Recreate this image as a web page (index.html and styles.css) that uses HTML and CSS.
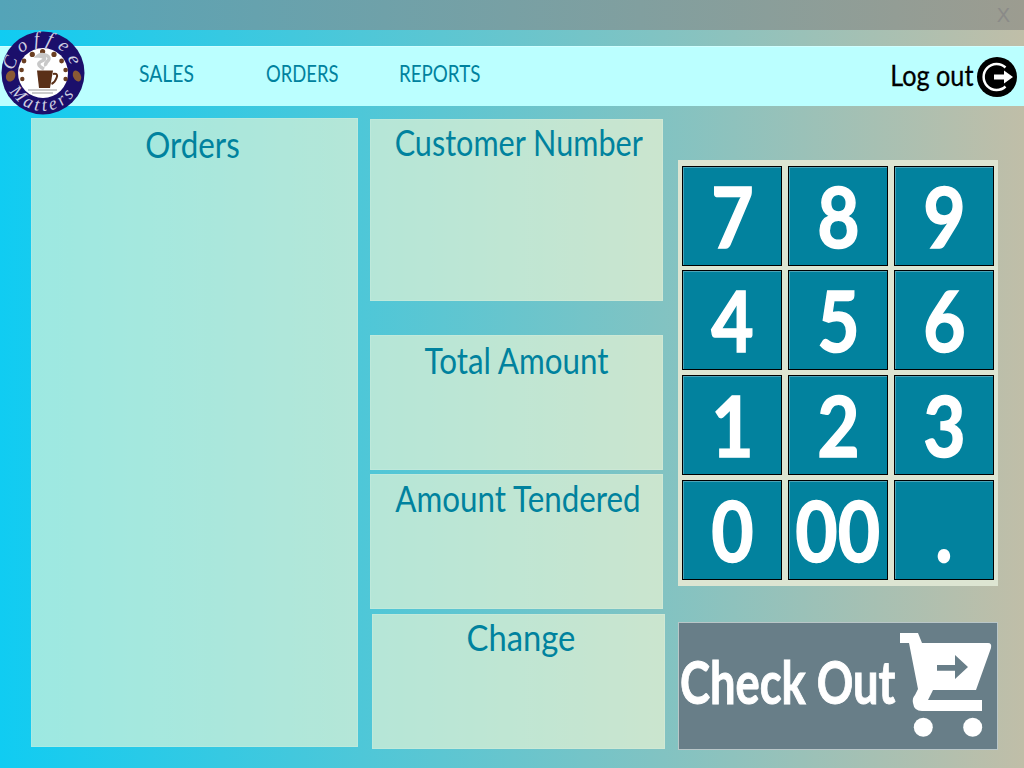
FILE: index.html
```html
<!DOCTYPE html>
<html lang="en">
<head>
<meta charset="utf-8">
<title>Coffee Matters POS</title>
<link rel="stylesheet" href="styles.css">
</head>
<body>
<div class="titlebar"><span class="close">X</span></div>
<header class="nav">
  <svg class="logo" viewBox="0 0 84 84" width="84" height="84">
    <circle cx="42" cy="42" r="41.500" fill="#1b0f6b"/>
    <circle cx="42" cy="42" r="25" fill="#fff"/>
    <defs>
      <path id="arcTop" d="M14.650 50 A28.500 28.500 0 1 1 69.350 50"/>
      <path id="arcBot" d="M4.500 48 A38 38 0 0 0 79.500 48"/>
    </defs>
    <g fill="#6b3f22">
      <circle cx="31.300" cy="23.400" r="2.600"/><circle cx="41.600" cy="20.600" r="2.600"/><circle cx="53" cy="23.400" r="2.600"/>
      <circle cx="60.600" cy="30" r="2.400"/><circle cx="64.600" cy="39" r="2.300"/><circle cx="64.600" cy="48" r="2.200"/>
      <circle cx="23" cy="30" r="2.400"/><circle cx="20.600" cy="39" r="2.300"/><circle cx="21.300" cy="48" r="2.200"/>
    </g>
    <ellipse cx="9.600" cy="45" rx="4.500" ry="5.800" fill="#8a5a35" transform="rotate(25 9.600 45)"/>
    <ellipse cx="76" cy="45" rx="3.800" ry="5.800" fill="#8a5a35" transform="rotate(-25 76 45)"/>
    <path d="M43 38c-6-3-7-6-2-8 5-2 2-5-4-5 3-3 12-1 11 3-1 3-5 4-3 7" fill="none" stroke="#c8c8c8" stroke-width="3.500"/>
    <path d="M36 39.500l2 17.500h11l3-17.500z" fill="#5a3018"/>
    <path d="M52 43c4-1 5 1 3.500 4-1 3-3 5-5 6" fill="none" stroke="#5a3018" stroke-width="2"/>
    <path d="M27 59h29M31 62h21" stroke="#999" stroke-width="1"/>
    <text class="logo-text coffee"><textPath href="#arcTop" startOffset="50%" text-anchor="middle">Coffee</textPath></text>
    <text class="logo-text matters"><textPath href="#arcBot" startOffset="50%" text-anchor="middle">Matters</textPath></text>
  </svg>
  <nav class="menu">
    <a class="menu-item sales">SALES</a>
    <a class="menu-item orders-link">ORDERS</a>
    <a class="menu-item reports">REPORTS</a>
  </nav>
  <div class="logout">
    <span class="logout-label">Log out</span>
    <svg viewBox="0 0 40 40" width="40" height="40">
      <circle cx="20" cy="20" r="20" fill="#000"/>
      <path d="M28.500 10.500A13 13 0 1 0 28.500 29.500" fill="none" stroke="#fff" stroke-width="2.500"/>
      <path d="M17 17.500h10v-4l9 6.500-9 6.500v-4H17z" fill="#fff"/>
    </svg>
  </div>
</header>
<main class="content">
  <section class="panel orders"><h2>Orders</h2></section>
  <div class="middle">
    <section class="panel customer"><h2>Customer Number</h2></section>
    <section class="panel total"><h2>Total Amount</h2></section>
    <section class="panel tendered"><h2>Amount Tendered</h2></section>
    <section class="panel change"><h2>Change</h2></section>
  </div>
  <div class="right">
    <div class="keypad">
      <button class="key"><span>7</span></button><button class="key"><span>8</span></button><button class="key"><span>9</span></button>
      <button class="key"><span>4</span></button><button class="key"><span>5</span></button><button class="key"><span>6</span></button>
      <button class="key"><span>1</span></button><button class="key"><span>2</span></button><button class="key"><span>3</span></button>
      <button class="key"><span>0</span></button><button class="key"><span>00</span></button><button class="key"><span>.</span></button>
    </div>
    <button class="checkout">
      <span class="checkout-label">Check Out</span>
      <svg class="cart" viewBox="0 0 94 108" width="94" height="108">
        <path fill="#fff" d="M0 1H18L22 11H88Q92 11 91 16L76 58H33L28 68H82V79H22Q14 79 13 71Q12 66 15 63L18 57L9 11H0Z"/>
        <path fill="#687e88" d="M37 33H55V23L68 35L55 47V38.700H37Z"/>
        <circle cx="23.300" cy="95.300" r="9.500" fill="#fff"/>
        <circle cx="72.700" cy="95.300" r="9.500" fill="#fff"/>
      </svg>
    </button>
  </div>
</main>
</body>
</html>
```
FILE: styles.css
```css
* { box-sizing: border-box; }
html, body { margin: 0; height: 768px; overflow: hidden; }
body {
  width: 1024px;
  background: linear-gradient(90deg, #10ccf2, #c0bea8);
  font-family: "Lato", "Liberation Sans", sans-serif;
  color: #00829e;
}
.titlebar {
  height: 30px;
  background: linear-gradient(90deg, #54a4b8, #9c9c90);
  display: flex;
  justify-content: flex-end;
  align-items: center;
  padding: 0 14px 0 0;
}
.close { color: #8a8a88; font-size: 20px; font-family: "Liberation Sans", sans-serif; }
.nav {
  margin-top: 16px;
  height: 60px;
  background: #bbffff;
  border-top: 1px solid #d0ffff;
  display: flex;
  align-items: center;
  position: relative;
}
.logo { position: absolute; left: 1px; top: -16px; overflow: visible; }
.logo-text { font-family: "Liberation Serif", serif; font-style: italic; fill: #cfcfe2; }
.coffee { font-size: 19px; letter-spacing: 6px; }
.matters { font-size: 18px; letter-spacing: 3.500px; }
.menu { display: flex; margin-left: 139px; font-size: 23px; padding-bottom: 7px; }
.menu-item { display: block; transform-origin: left center; white-space: nowrap; }
.sales { width: 127px; transform: scaleX(.84); }
.orders-link { width: 133px; transform: scaleX(.8); }
.reports { transform: scaleX(.815); }
.logout { margin-left: auto; display: flex; align-items: center; gap: 4px; margin-right: 7px; color: #000; font-size: 28px; }
.logout-label { transform: scaleX(.9); transform-origin: right center; white-space: nowrap; -webkit-text-stroke: .3px #000; margin-bottom: 3px; }
.logout svg { display: block; }
.content {
  display: flex;
  align-items: flex-start;
  padding: 12px 0 0 31px;
}
.panel {
  background: rgba(255, 254, 215, 0.58);
  border: 1px solid rgba(255, 255, 255, 0.12);
  text-align: center;
}
.panel h2 { margin: 0; font-weight: 400; font-size: 36px; line-height: 48px; white-space: nowrap; transform: scaleX(.87); }
.orders { width: 327px; height: 629px; padding-top: 1px; padding-right: 4px; }
.middle { width: 295px; margin-left: 12px; margin-top: 1px; display: flex; flex-direction: column; }
.customer { width: 293px; height: 182px; padding-left: 2px; }
.customer h2 { margin-top: -2px; transform: scaleX(.85); }
.total { width: 293px; height: 135px; margin-top: 34px; }
.tendered { width: 293px; height: 135px; margin-top: 4px; padding-left: 3px; }
.tendered h2 { margin-top: -1px; }
.change { width: 293px; height: 135px; margin-top: 5px; margin-left: 2px; padding-left: 5px; }
.change h2 { margin-top: -2px; transform: scaleX(.91); }
.right { width: 320px; margin-left: 13px; margin-top: 42px; }
.keypad {
  height: 426px;
  padding: 5px 3px;
  background: #dde5d2;
  display: grid;
  grid-template-columns: repeat(3, 100px);
  grid-auto-rows: 100px;
  column-gap: 6px;
  row-gap: 5px;
  justify-content: center;
}
.key {
  height: 100px;
  background: #02829e;
  border: 1px solid #000;
  box-shadow: inset 1px 1px 0 #4aa3b8;
  color: #fff;
  font: 700 84px/1 "Lato", "Liberation Sans", sans-serif;
  padding: 0;
}
.key:nth-child(-n+3) { margin-top: 1px; }
.key span { display: inline-block; transform: scaleX(.87); -webkit-text-stroke: 1.500px #fff; }
.checkout {
  margin-top: 36px;
  width: 320px;
  height: 128px;
  background: #687e88;
  border: 1px solid #b9c6c8;
  padding: 0 3px 0 1px;
  display: flex;
  justify-content: space-between;
  align-items: center;
  color: #fff;
}
.checkout-label { font: 700 60px/1 "Lato", "Liberation Sans", sans-serif; white-space: nowrap; width: 216px; text-align: left; transform: scaleX(.755); transform-origin: left center; margin-bottom: 10px; -webkit-text-stroke: 1px #fff; }
.cart { flex-shrink: 0; }
```
